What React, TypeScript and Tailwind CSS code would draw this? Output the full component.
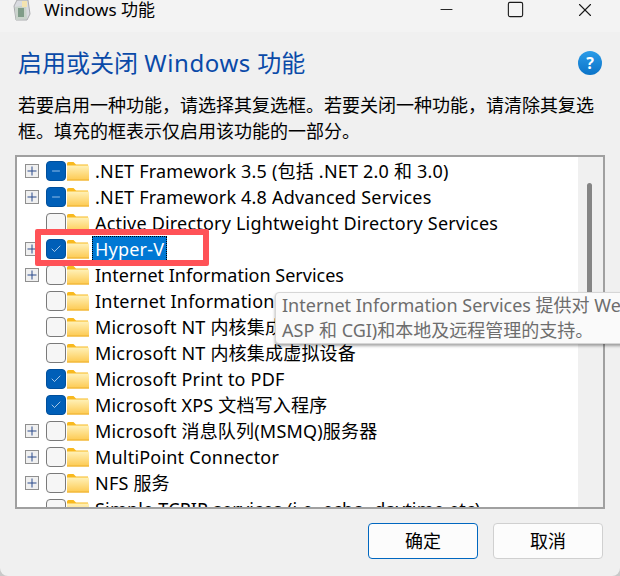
import { Check, Minus, Square, X } from "lucide-react";

type Row = {
  label: string;
  expand?: boolean;
  state?: "none" | "partial" | "checked";
};

const rows: Row[] = [
  { label: ".NET Framework 3.5 (包括 .NET 2.0 和 3.0)", expand: true, state: "partial" },
  { label: ".NET Framework 4.8 Advanced Services", expand: true, state: "partial" },
  { label: "Active Directory Lightweight Directory Services" },
  { label: "Hyper-V", expand: true, state: "checked" },
  { label: "Internet Information Services", expand: true },
  { label: "Internet Information Services 可承载的 Web 核心" },
  { label: "Microsoft NT 内核集成版本" },
  { label: "Microsoft NT 内核集成虚拟设备" },
  { label: "Microsoft Print to PDF", state: "checked" },
  { label: "Microsoft XPS 文档写入程序", state: "checked" },
  { label: "Microsoft 消息队列(MSMQ)服务器", expand: true },
  { label: "MultiPoint Connector", expand: true },
  { label: "NFS 服务", expand: true },
  { label: "Simple TCPIP services (i.e. echo, daytime etc)" },
];

const Folder = () => (
  <svg width="22" height="19" viewBox="0 0 22 19" className="flex-none">
    <defs>
      <linearGradient id="folderBody" x1="0" y1="0" x2="0" y2="1">
        <stop offset="0" stopColor="#fff1b8" />
        <stop offset="1" stopColor="#fdc94f" />
      </linearGradient>
    </defs>
    <path d="M0 1.5 Q0 0 1.5 0 H6.5 L9 2.5 H21 V5 H0 Z" fill="#f8b91f" />
    <rect x="0" y="3.5" width="22" height="15" fill="url(#folderBody)" />
    <rect x="0" y="17.5" width="22" height="1" fill="#eeb02e" />
  </svg>
);

const Expander = () => (
  <svg width="14" height="14" viewBox="0 0 14 14" className="flex-none">
    <rect x="0.5" y="0.5" width="13" height="13" fill="#f0f0f0" stroke="#8f8f8f" />
    <path d="M2.5 7 H11.5 M7 2.5 V11.5" stroke="#2b4a8b" strokeWidth="1" />
  </svg>
);

const CheckBox = ({ state }: { state: Row["state"] }) => {
  if (state === "partial") {
    return (
      <span className="flex h-5 w-5 flex-none items-center justify-center rounded-[4px] border border-[#004f9c] bg-[#005fb8]">
        <Minus size={12} strokeWidth={2} color="#8fbde8" />
      </span>
    );
  }
  if (state === "checked") {
    return (
      <span className="flex h-5 w-5 flex-none items-center justify-center rounded-[4px] border border-[#004f9c] bg-[#005fb8]">
        <Check size={12} strokeWidth={1.3} color="#ffffff" />
      </span>
    );
  }
  return <span className="h-5 w-5 flex-none rounded-[4px] border border-[#7a7a7a] bg-[#f6f6f6]" />;
};

const App = () => {
  return (
    <div className="h-[576px] w-[620px] overflow-hidden bg-[#c9c9c9] font-['Noto_Sans','Noto_Sans_CJK_SC',sans-serif] text-black">
      <div className="relative flex h-full flex-col overflow-hidden rounded-b-[8px] bg-[#f0f0f0]">
        {/* Title bar */}
        <div className="flex h-8 flex-none items-start bg-[#f3f3f3]">
          <svg width="20" height="21" viewBox="0 0 20 21" className="ml-[11px] flex-none">
            <path d="M3 6 L6 0 H17 L19 14 L16 20 L5 20 Z" fill="#d9dbe0" stroke="#9a9ca0" strokeWidth="0.8" />
            <path d="M4 7 L15 5 L16 19 L5 20 Z" fill="#c9d3cb" />
            <rect x="7" y="8" width="6" height="9" fill="#7f9c88" />
            <rect x="11" y="1" width="5" height="6" fill="#f3e3b0" />
          </svg>
          <span className="ml-[13px] text-[17px] leading-[20px]">Windows 功能</span>
          <div className="ml-auto flex">
            <span className="flex h-[18px] w-[70px] items-center justify-center pl-[2px]">
              <Minus size={19} strokeWidth={1.2} color="#1a1a1a" />
            </span>
            <span className="flex h-[18px] w-[70px] items-center justify-center">
              <Square size={19} strokeWidth={1.4} color="#1a1a1a" />
            </span>
            <span className="flex h-[19px] w-[70px] items-center justify-center">
              <X size={22} strokeWidth={1.2} color="#1a1a1a" />
            </span>
          </div>
        </div>

        {/* Heading */}
        <div className="flex flex-none items-center justify-between pl-[18px] pr-[18px] pt-[14px]">
          <h1 className="text-2xl leading-[34px] text-[#0a4aa8]">
            启用或关闭 <span className="tracking-[0.6px]">Windows</span> 功能
          </h1>
          <span className="flex h-6 w-6 items-center justify-center rounded-full bg-gradient-to-b from-[#2b9ce8] to-[#0a73c8] text-base font-bold leading-none text-white">
            ?
          </span>
        </div>

        <p className="mt-3 flex-none px-[18px] text-lg leading-[26px]">
          若要启用一种功能，请选择其复选框。若要关闭一种功能，请清除其复选框。填充的框表示仅启用该功能的一部分。
        </p>

        {/* Feature list */}
        <div className="mx-[15px] mt-[11px] flex h-[354px] flex-none overflow-hidden border-2 border-[#a0a0a0] bg-white">
          <div className="min-w-0 flex-1 pt-px">
            {rows.map((row, index) => (
              <div key={index} className="flex h-[26px] items-center whitespace-nowrap pl-2 text-lg tracking-[0.2px]">
                <span className="flex w-[21px] flex-none">{row.expand && <Expander />}</span>
                <CheckBox state={row.state} />
                <span className="ml-px">
                  <Folder />
                </span>
                {row.label === "Hyper-V" ? (
                  <span className="ml-[3px] border border-dotted border-black bg-[#0078d4] px-[2px] leading-[24px] text-white">
                    {row.label}
                  </span>
                ) : index === 4 ? (
                  <span className="ml-[6px] tracking-normal">{row.label}</span>
                ) : (
                  <span className="ml-[6px]">{row.label}</span>
                )}
              </div>
            ))}
          </div>
          {/* Scrollbar */}
          <div className="w-[25px] flex-none bg-[#f0f0f0] pl-[9px] pt-[26px]">
            <div className="h-[140px] w-[5px] rounded-full bg-[#858585]" />
          </div>
        </div>

        {/* Buttons */}
        <div className="flex flex-1 items-start justify-end gap-[15px] pr-[17px] pt-[14px]">
          <button className="h-9 w-[110px] rounded-[4px] border border-[#0067c0] bg-[#fcfcfc] text-lg">确定</button>
          <button className="h-9 w-[110px] rounded-[4px] border border-[#d0d0d0] bg-[#fcfcfc] text-lg">取消</button>
        </div>

        {/* Red highlight drawn over the screenshot */}
        <div className="absolute left-[35px] top-[229px] h-[37px] w-[174px] rounded-[2px] border-[6px] border-[#ff5257]" />

        {/* Tooltip */}
        <div className="absolute left-[275px] top-[292px] h-[52px] w-[360px] whitespace-nowrap rounded-l-[4px] border border-[#d6d6d6] bg-[#fafafa] pl-[6px] text-lg leading-[25px] text-[#6d6d6d] shadow-[0_2px_3px_rgba(0,0,0,0.35)]">
          <div>Internet Information Services 提供对 Web</div>
          <div>ASP 和 CGI)和本地及远程管理的支持。</div>
        </div>
      </div>
    </div>
  );
};

export default App;
